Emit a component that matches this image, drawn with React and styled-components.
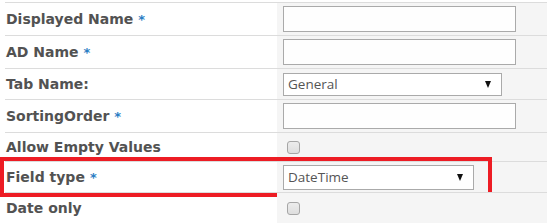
import React from 'react';
import styled, { createGlobalStyle } from 'styled-components';

const GlobalStyle = createGlobalStyle`
  html, body {
    margin: 0;
    padding: 0;
    background: #ffffff;
  }
`;

const fields = [
  { label: 'Displayed Name', required: true, type: 'text', height: 33 },
  { label: 'AD Name', required: true, type: 'text', height: 33 },
  { label: 'Tab Name:', type: 'select', value: 'General', width: 219, height: 31 },
  { label: 'SortingOrder', required: true, type: 'text', height: 33 },
  { label: 'Allow Empty Values', type: 'checkbox', height: 29 },
  { label: 'Field type', required: true, type: 'select', value: 'DateTime', width: 191, height: 31, highlight: true },
  { label: 'Date only', type: 'checkbox', height: 31 },
];

const App = () => {
  return (
    <>
      <GlobalStyle />
      <Form>
        {fields.map((field) => (
          <Row key={field.label} $height={field.height}>
            <LabelCell>
              {field.label}
              {field.required && <Required>*</Required>}
            </LabelCell>
            <ValueCell>
              {field.type === 'text' && <TextInput type="text" />}
              {field.type === 'select' && (
                <SelectBox $width={field.width} $tall={field.highlight}>
                  <SelectValue>{field.value}</SelectValue>
                  <Arrow />
                </SelectBox>
              )}
              {field.type === 'checkbox' && <Checkbox />}
            </ValueCell>
            {field.highlight && <Highlight />}
          </Row>
        ))}
      </Form>
    </>
  );
};

export default App;

const Form = styled.div`
  padding: 2px 0 0 5px;
  width: 542px;
`;

const Row = styled.div`
  position: relative;
  display: grid;
  grid-template-columns: 272px 1fr;
  height: ${(p) => p.$height}px;
  border-top: 1px solid #dcdcdc;
  box-sizing: border-box;
`;

const LabelCell = styled.div`
  display: flex;
  align-items: center;
  padding-left: 1px;
  font-family: 'DejaVu Sans', Verdana, sans-serif;
  font-weight: bold;
  font-size: 14px;
  color: #525252;
`;

const Required = styled.span`
  margin-left: 5px;
  color: #2a7dc4;
  font-size: 13px;
`;

const ValueCell = styled.div`
  display: flex;
  align-items: center;
  padding-left: 6px;
  background: #f5f5f5;
`;

const TextInput = styled.input`
  box-sizing: border-box;
  width: 233px;
  height: 26px;
  margin: 0;
  border: 1px solid #aaaaaa;
  background: #fefefe;
  outline: none;
`;

const SelectBox = styled.div`
  box-sizing: border-box;
  display: flex;
  align-items: center;
  justify-content: space-between;
  width: ${(p) => p.$width}px;
  height: ${(p) => (p.$tall ? 25 : 23)}px;
  padding: 0 10px 0 4px;
  border: 1px solid #aaaaaa;
  background: #ffffff;
`;

const SelectValue = styled.span`
  font-family: 'Open Sans', sans-serif;
  font-size: 13.5px;
  color: #555555;
`;

const Arrow = styled.span`
  width: 0;
  height: 0;
  border-left: 3.5px solid transparent;
  border-right: 3.5px solid transparent;
  border-top: 7px solid #111111;
`;

const Checkbox = styled.span`
  box-sizing: border-box;
  margin-left: 4px;
  width: 13px;
  height: 13px;
  border: 1px solid #a6a6a6;
  border-radius: 3px;
  background: linear-gradient(#ececec, #dedede);
`;

const Highlight = styled.div`
  position: absolute;
  left: -5px;
  top: -5px;
  width: 492px;
  height: 40px;
  box-sizing: border-box;
  border: 4px solid #ed1c24;
  pointer-events: none;
`;
